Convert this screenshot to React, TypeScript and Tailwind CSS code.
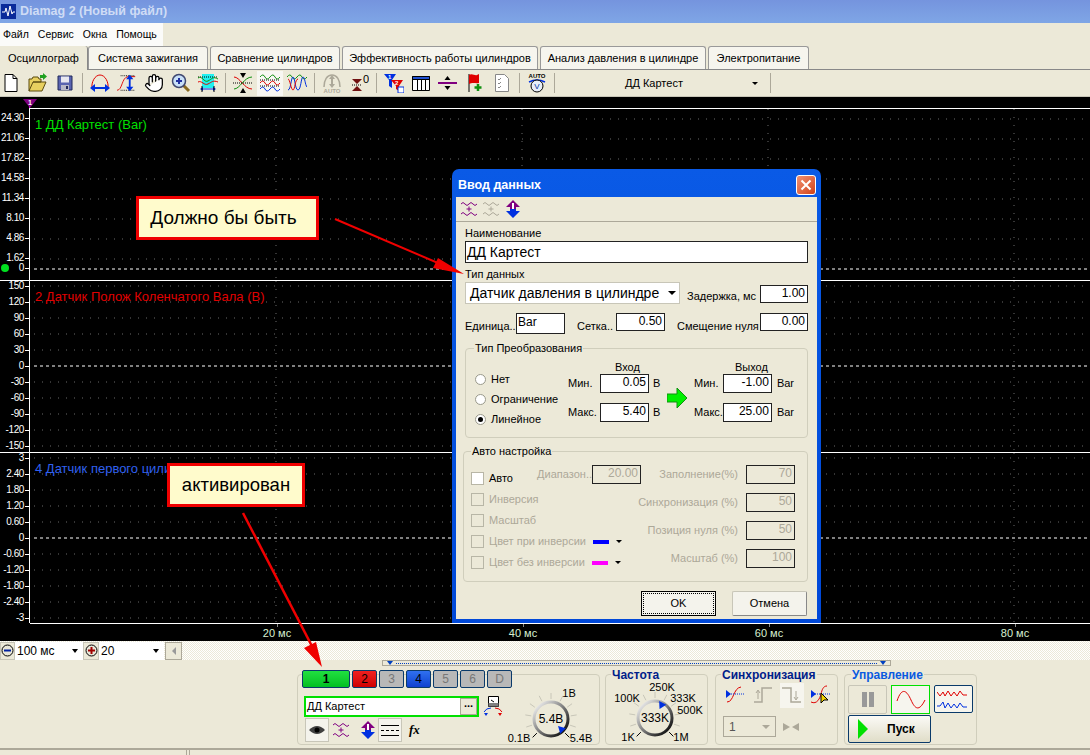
import React from 'react';
import { Hand } from 'lucide-react';

function IconNew() {
  return (
    <svg width="20" height="20" viewBox="0 0 20 20">
      <path d="M4 1.5h8l4 4v13H4z" fill="#fff" stroke="#000" />
      <path d="M12 1.5v4h4" fill="none" stroke="#000" />
    </svg>
  );
}

function IconOpen() {
  return (
    <svg width="20" height="20" viewBox="0 0 20 20">
      <path d="M1 18V6h3l1-2h5l1 2h2v3H5L1 18h13l4-9H5" fill="#e8d060" stroke="#5a4a10" />
      <path d="M12 2h3V0l4 3.5-4 3.5V5h-3z" fill="#20a020" />
    </svg>
  );
}

function IconSave() {
  return (
    <svg width="20" height="20" viewBox="0 0 20 20">
      <path d="M3 3h14v14H3z" fill="#5a64b0" stroke="#20285a" />
      <path d="M6 3.5h8v6H6z" fill="#e8e8f0" />
      <path d="M6 12h8v5H6z" fill="#b8b8c8" />
      <path d="M11 13h2v3h-2z" fill="#20285a" />
    </svg>
  );
}

function IconArc() {
  return (
    <svg width="20" height="20" viewBox="0 0 20 20" fill="none">
      <path d="M2 16C1 9 5 2 10 2s9 7 8 14" stroke="#e00000" />
      <path d="M3 15h14" stroke="#0030e0" strokeWidth="2" />
      <path d="M0 15l5-4v8zM20 15l-5-4v8z" fill="#0030e0" />
    </svg>
  );
}

function IconCurve() {
  return (
    <svg width="20" height="20" viewBox="0 0 22 20" fill="none">
      <path d="M0 18c6 0 5-14 12-15h8" stroke="#e00000" />
      <path d="M4 2h16M4 18h16" stroke="#000" strokeDasharray="1 1" />
      <path d="M14 5v10" stroke="#0030e0" strokeWidth="2" />
      <path d="M14 1l4 5h-8zM14 19l4-5h-8z" fill="#0030e0" />
    </svg>
  );
}

function IconZoom() {
  return (
    <svg width="20" height="20" viewBox="0 0 20 20" fill="none">
      <path d="M12 12l6 6" stroke="#8a6a20" strokeWidth="3" />
      <circle cx="8" cy="8" r="6.5" fill="#c8e0f8" stroke="#404870" strokeWidth="1.5" />
      <path d="M5 8h6M8 5v6" stroke="#2030a0" strokeWidth="2" />
    </svg>
  );
}

function IconCyan() {
  return (
    <svg width="20" height="20" viewBox="0 0 20 20" fill="none">
      <path d="M4 1h12v14H4z" fill="#20f0f0" />
      <path d="M0 4h20" stroke="#000" strokeDasharray="1 1" />
      <path d="M0 5c4-3 6 5 10 3s5-5 10-2" stroke="#109010" />
      <path d="M0 9c4-2 6 4 10 2s5-4 10-2" stroke="#e00000" />
      <path d="M4 16h12" stroke="#0030e0" />
      <path d="M2 16l3-2v4zM18 16l-3-2v4z" fill="#0030e0" />
      <path d="M4 13v6M16 13v6" stroke="#000" />
    </svg>
  );
}

function IconCross() {
  return (
    <svg width="20" height="20" viewBox="0 0 20 20" fill="none">
      <path d="M1 4c6 0 10 12 18 12" stroke="#e00000" />
      <path d="M1 16c6 0 10-12 18-12" stroke="#109010" />
      <path d="M0 10h20" stroke="#000" strokeDasharray="1 1" />
      <path d="M10 5L7 0h6zM10 15l-3 5h6z" fill="#000" />
    </svg>
  );
}

function IconWaves() {
  return (
    <svg width="20" height="20" viewBox="0 0 20 20" fill="none">
      <path d="M0 4q3-4 5 0t5 0 5 0 5 0" stroke="#109010" />
      <path d="M0 10q3-4 5 0t5 0 5 0 5 0" stroke="#e00000" />
      <path d="M0 16q3-4 5 0t5 0 5 0 5 0" stroke="#0030e0" />
      <path d="M0 7h20M0 13h20" stroke="#000" strokeDasharray="1 1" />
    </svg>
  );
}

function IconTwoWaves() {
  return (
    <svg width="20" height="20" viewBox="0 0 20 20" fill="none">
      <path d="M0 4q3-4 5 0t5 0 5 0 5 0" stroke="#109010" />
      <path d="M1 17c3 0 3-13 5-13s2 13 5 13 3-13 5-13 2 8 4 10" stroke="#0030e0" />
      <path d="M1 6c2 0 3 11 5 11s2-11 5-11" stroke="#e00000" />
    </svg>
  );
}

function IconAuto() {
  return (
    <svg width="20" height="20" viewBox="0 0 20 20" fill="none">
      <path d="M2 14C2 7 5 2 10 2s8 5 8 12" stroke="#aca899" strokeWidth="1.5" />
      <path d="M10 4v9" stroke="#aca899" strokeWidth="2" />
      <path d="M10 2l3 4H7zM10 15l3-4H7z" fill="#aca899" />
      <text x="10" y="20" textAnchor="middle" fontSize="6" fontWeight="700" fill="#aca899">AUTO</text>
    </svg>
  );
}

function IconZero() {
  return (
    <svg width="20" height="20" viewBox="0 0 20 20" fill="none">
      <path d="M3 6h10l-5 5z" fill="#701010" />
      <path d="M3 12h10" stroke="#000" strokeDasharray="1 1" />
      <path d="M8 13l5 5H3z" fill="#701010" />
      <text x="14" y="10" fontSize="11" fill="#000">0</text>
    </svg>
  );
}

function IconFilter() {
  return (
    <svg width="20" height="20" viewBox="0 0 20 20" fill="none">
      <path d="M0 1h12L8 7v8L5 13V7z" fill="#0030e0" />
      <text x="4" y="6" fontSize="6" fontWeight="700" fill="#fff">1</text>
      <path d="M7 7h12l-4 6v5l-3-2v-3z" fill="#e00000" />
      <text x="11" y="12" fontSize="6" fontWeight="700" fill="#fff">2</text>
      <path d="M14 14h6v6h-6z" fill="#fff" stroke="#0030e0" />
    </svg>
  );
}

function IconTable() {
  return (
    <svg width="20" height="20" viewBox="0 0 20 20" fill="none">
      <path d="M1.5 3.5h17v14h-17z" fill="#fff" stroke="#000" />
      <path d="M1.5 3.5h17v3h-17z" fill="#2050d0" stroke="#000" />
      <path d="M6.5 6v11M10.5 6v11M14.5 6v11" stroke="#000" />
    </svg>
  );
}

function IconSplit() {
  return (
    <svg width="20" height="20" viewBox="0 0 20 20" fill="none">
      <path d="M0 10h19" stroke="#800080" strokeWidth="2" />
      <path d="M9.5 3l3 4h-6zM9.5 17l3-4h-6z" fill="#000" />
    </svg>
  );
}

function IconFlag() {
  return (
    <svg width="20" height="20" viewBox="0 0 20 20" fill="none">
      <path d="M4 1v18" stroke="#000" />
      <path d="M4 2c3-2 6 1 8 0l2-1v9c-3 1-6-1-10 1z" fill="#e00000" />
      <path d="M13 11v7M9.5 14.5h7" stroke="#109010" strokeWidth="2.5" />
    </svg>
  );
}

function IconChecklist() {
  return (
    <svg width="20" height="20" viewBox="0 0 20 20" fill="none">
      <path d="M3.5 1.5h9l4 4v13h-13z" fill="#fff" stroke="#888" />
      <path d="M6 6l1 1 2-2M6 10l1 1 2-2M6 14l1 1 2-2" stroke="#888" />
    </svg>
  );
}

function IconAutoV() {
  return (
    <svg width="20" height="20" viewBox="0 0 20 20" fill="none">
      <text x="10" y="5" textAnchor="middle" fontSize="6" fontWeight="700" fill="#000">AUTO</text>
      <path d="M2 9q8-4 16 0" stroke="#0030e0" strokeWidth="1.5" />
      <circle cx="10" cy="13" r="6" fill="#e8eef8" stroke="#000" />
      <text x="10" y="16" textAnchor="middle" fontSize="8" fill="#0030a0">V</text>
    </svg>
  );
}

function WaveAdd({ color }: { color: string }) {
  return (
    <svg width="16" height="16" viewBox="0 0 16 16" fill="none">
      <path d="M0 3q2-3 4 0t4 0 4 0 4 0M0 13q2-3 4 0t4 0 4 0 4 0" stroke={color} />
      <path d="M8 5.5v5M5.5 8h5" stroke={color} />
    </svg>
  );
}

function UpDown() {
  return (
    <svg width="16" height="18" viewBox="0 0 16 18">
      <path d="M8 0l7 7h-4v2H5V7H1z" fill="#800080" />
      <path d="M5 9h6v2h4l-7 7-7-7h4z" fill="#0030e0" />
      <path d="M7 3h2v6H7z" fill="#fff" />
    </svg>
  );
}

function Dial({
  w,
  cx,
  cy,
  value,
  angle,
  labels,
  className,
}: {
  w: number;
  cx: number;
  cy: number;
  value: string;
  angle: number;
  labels: [string, number, number][];
  className?: string;
}) {
  const ticks = [-135, -108, -81, -54, -27, 0, 27, 54, 81, 108, 135];
  const id = `ring${cx}${w}`;
  const rad = (angle * Math.PI) / 180;
  return (
    <svg className={className} width={w} height="71" viewBox={`0 0 ${w} 71`} fontSize="11" fill="#000">
      <defs>
        <linearGradient id={id} x1="0" y1="0" x2="1" y2="1">
          <stop offset="0.1" stopColor="#e8e8e8" />
          <stop offset="0.9" stopColor="#111" />
        </linearGradient>
      </defs>
      {ticks.map((a) => {
        const r = (a * Math.PI) / 180;
        return (
          <line
            key={a}
            x1={cx + 20 * Math.sin(r)}
            y1={cy - 20 * Math.cos(r)}
            x2={cx + 26 * Math.sin(r)}
            y2={cy - 26 * Math.cos(r)}
            stroke={Math.abs(a) === 135 ? '#000' : '#c8c6b8'}
          />
        );
      })}
      <circle cx={cx} cy={cy} r="17" fill="#ece9d8" stroke={`url(#${id})`} strokeWidth="3" />
      <text x={cx} y={cy + 4} textAnchor="middle" fontSize="12">{value}</text>
      <path
        d="M-4 0h8L0-7z"
        fill="#0030e0"
        transform={`translate(${cx + 17 * Math.sin(rad)} ${cy - 17 * Math.cos(rad)}) rotate(${angle + 180})`}
      />
      {labels.map(([t, x, y]) => (
        <text key={t + x} x={x} y={y + 4} textAnchor="middle">{t}</text>
      ))}
    </svg>
  );
}

type PaneProps = {
  heightClass: string;
  full: boolean;
  title: string;
  titleClass: string;
  ticks: [string, number][];
  zero: number;
};

function Pane({ heightClass, full, title, titleClass, ticks, zero }: PaneProps) {
  return (
    <div className={`relative flex ${heightClass} ${full ? 'border-t border-white' : ''}`}>
      <div className="relative w-[30px] border-r border-white">
        {ticks.map(([label, y]) => (
          <div
            key={label}
            className="absolute right-[5px] text-[10px] leading-[12px] tracking-[-0.4px] text-white"
            style={{ top: y - 6 }}
          >
            {label}
          </div>
        ))}
        {ticks.map(([label, y]) => (
          <div key={label} className="absolute right-0 h-px w-[4px] bg-white" style={{ top: y }} />
        ))}
      </div>
      <div className={`relative flex-1 ${full ? '' : 'border-t border-white'}`}>
        <svg className="absolute inset-0 h-full w-full">
          {ticks.map(([label, y]) => (
            <line
              key={label}
              x1="4"
              x2="1060"
              y1={y}
              y2={y}
              stroke={y === zero ? '#fff' : '#6a6a6a'}
              strokeDasharray={y === zero ? '3 3' : '1 7'}
            />
          ))}
          {[246, 492, 738, 984].map((x) => (
            <line key={x} x1={x} x2={x} y1="0" y2="172" stroke="#6a6a6a" strokeDasharray="1 7" />
          ))}
        </svg>
        <div className={`relative pl-[5px] pt-[9px] text-[13px] leading-[14px] ${titleClass}`}>{title}</div>
      </div>
    </div>
  );
}

function Field({ value, className, muted }: { value: string; className: string; muted?: boolean }) {
  return (
    <div
      className={`flex-none border border-[#222] pr-[2px] text-right text-[12px] leading-[15px] ${
        muted ? 'bg-[#ece9d8] text-[#aca899]' : 'bg-white text-black'
      } ${className}`}
    >
      {value}
    </div>
  );
}

function Radio({ label, checked }: { label: string; checked?: boolean }) {
  return (
    <div className="flex h-[20px] items-center gap-[5px] text-[11px]">
      <span className="flex h-[11px] w-[11px] items-center justify-center rounded-full border border-[#9a9a8c] bg-white">
        {checked && <span className="h-[5px] w-[5px] rounded-full bg-black" />}
      </span>
      {label}
    </div>
  );
}

function CheckRow({ label, active, swatch }: { label: string; active?: boolean; swatch?: string }) {
  return (
    <div className={`flex h-[21px] items-center gap-[5px] text-[11px] ${active ? 'text-black' : 'text-[#aca899]'}`}>
      <span className={`h-[13px] w-[13px] border border-[#b8b6a6] ${active ? 'bg-white' : ''}`} />
      <span className="whitespace-nowrap">{label}</span>
      {swatch && (
        <>
          <span className={`ml-[2px] h-[4px] w-[16px] ${swatch}`} />
          <span className="ml-[2px] h-0 w-0 border-x-[3px] border-t-[3px] border-x-transparent border-t-black" />
        </>
      )}
    </div>
  );
}

function Dialog() {
  return (
    <div className="absolute left-[452px] top-[169px] flex h-[454px] w-[369px] flex-col rounded-t-[7px] bg-gradient-to-b from-[#0a5ae6] to-[#0048d8] p-[4px] pt-0 text-[11px] text-black">
      <div className="flex h-[28px] flex-none items-center justify-between pl-[2px] pr-[1px]">
        <span className="pt-[5px] text-[12.5px] font-bold text-white">Ввод данных</span>
        <span className="mt-[3px] flex h-[20px] w-[20px] items-center justify-center rounded-[3px] border border-white bg-gradient-to-br from-[#f09070] to-[#d04010]">
          <svg width="12" height="12" viewBox="0 0 12 12">
            <path d="M1.5 1.5l9 9M10.5 1.5l-9 9" stroke="#fff" strokeWidth="2" />
          </svg>
        </span>
      </div>
      <div className="flex flex-1 flex-col bg-[#ece9d8]">
        <div className="flex h-[25px] flex-none items-center gap-[6px] border-b border-[#aca899] pl-[5px]">
          <WaveAdd color="#800080" />
          <WaveAdd color="#aca899" />
          <UpDown />
        </div>
        <div className="flex flex-col px-[9px] pt-[4px]">
          <div className="h-[14px] leading-[14px]">Наименование</div>
          <div className="mt-[1px] h-[22px] border border-[#222] bg-white pl-[1px] text-[14px] leading-[20px]">ДД Картест</div>
          <div className="mt-[5px] h-[13px] leading-[13px]">Тип данных</div>
          <div className="mt-[1px] flex h-[22px] items-end">
            <div className="flex h-[22px] w-[215px] flex-none items-center justify-between border border-[#c8c6b8] bg-white pl-[4px] pr-[3px] text-[14px]">
              Датчик давления в цилиндре
              <span className="h-0 w-0 border-x-[4px] border-t-[4px] border-x-transparent border-t-black" />
            </div>
            <span className="ml-[7px] w-[73px] whitespace-nowrap">Задержка, мс</span>
            <Field value="1.00" className="mb-[1px] h-[18px] w-[48px]" />
          </div>
          <div className="mt-[9px] flex h-[21px] items-start">
            <span className="mt-[5px] w-[51px]">Единица..</span>
            <div className="h-[21px] w-[49px] border border-[#222] bg-white pl-[1px] text-[12px] leading-[17px]">Bar</div>
            <span className="ml-[12px] mt-[5px] w-[39px]">Сетка..</span>
            <Field value="0.50" className="h-[18px] w-[49px]" />
            <span className="ml-[12px] mt-[5px] w-[83px] whitespace-nowrap">Смещение нуля</span>
            <Field value="0.00" className="h-[18px] w-[48px]" />
          </div>

          <div className="relative mt-[14px] flex h-[90px] rounded-[4px] border border-[#d0cebc]">
            <span className="absolute -top-[7px] left-[8px] bg-[#ece9d8] px-px leading-[12px]">Тип Преобразования</span>
            <div className="w-[102px] pl-[9px] pt-[20px]">
              <Radio label="Нет" />
              <Radio label="Ограничение" />
              <Radio label="Линейное" checked />
            </div>
            <div className="w-[99px]">
              <div className="h-[25px] pl-[47px] pt-[12px] leading-[13px]">Вход</div>
              <div className="flex items-center">
                <span className="w-[32px]">Мин.</span>
                <Field value="0.05" className="h-[19px] w-[49px]" />
                <span className="ml-[4px]">В</span>
              </div>
              <div className="mt-[10px] flex items-center">
                <span className="w-[32px]">Макс.</span>
                <Field value="5.40" className="h-[19px] w-[49px]" />
                <span className="ml-[4px]">В</span>
              </div>
            </div>
            <div className="w-[27px] pt-[39px]">
              <svg width="20" height="20" viewBox="0 0 20 20">
                <path d="M0 6h10V0l10 10-10 10v-6H0z" fill="#00f000" stroke="#109010" />
              </svg>
            </div>
            <div className="w-[100px]">
              <div className="h-[25px] pl-[41px] pt-[12px] leading-[13px]">Выход</div>
              <div className="flex items-center">
                <span className="w-[30px]">Мин.</span>
                <Field value="-1.00" className="h-[19px] w-[49px]" />
                <span className="ml-[5px]">Bar</span>
              </div>
              <div className="mt-[10px] flex items-center">
                <span className="w-[30px]">Макс.</span>
                <Field value="25.00" className="h-[19px] w-[49px]" />
                <span className="ml-[5px]">Bar</span>
              </div>
            </div>
          </div>

          <div className="relative -ml-[2px] mt-[13px] flex h-[131px] rounded-[4px] border border-[#d0cebc]">
            <span className="absolute -top-[7px] left-[7px] bg-[#ece9d8] px-px leading-[12px]">Авто настройка</span>
            <div className="relative w-[163px] flex-none pl-[7px] pt-[16px]">
              <CheckRow label="Авто" active />
              <CheckRow label="Инверсия" />
              <CheckRow label="Масштаб" />
              <CheckRow label="Цвет при инверсии" swatch="bg-[#0000ff]" />
              <CheckRow label="Цвет без инверсии" swatch="bg-[#ff00ff]" />
            </div>
            <div className="relative flex-1">
              <div className="absolute left-[-90px] top-[13px] flex items-center">
                <span className="w-[55px] whitespace-nowrap text-right text-[#aca899]">Диапазон..</span>
                <Field value="20.00" muted className="h-[19px] w-[49px]" />
              </div>
              <div className="flex flex-col items-end gap-[9px] pr-[12px] pt-[13px] text-[#aca899]">
                <div className="flex items-center gap-[8px] whitespace-nowrap">Заполнение(%)<Field value="70" muted className="h-[19px] w-[49px]" /></div>
                <div className="flex items-center gap-[8px] whitespace-nowrap">Синхронизация (%)<Field value="50" muted className="h-[19px] w-[49px]" /></div>
                <div className="flex items-center gap-[8px] whitespace-nowrap">Позиция нуля (%)<Field value="50" muted className="h-[19px] w-[49px]" /></div>
                <div className="flex items-center gap-[8px] whitespace-nowrap">Масштаб (%)<Field value="100" muted className="h-[19px] w-[49px]" /></div>
              </div>
            </div>
          </div>

          <div className="mt-[9px] flex justify-end gap-[16px] pr-px">
            <div className="flex h-[25px] w-[75px] items-center justify-center border border-black bg-[#f4f3ec] outline-1 -outline-offset-3 outline-dotted outline-black">OK</div>
            <div className="flex h-[25px] w-[75px] items-center justify-center rounded-[2px] border border-[#c8c6b8] border-b-[#888] border-r-[#888] bg-[#f4f3ec]">Отмена</div>
          </div>
        </div>
      </div>
    </div>
  );
}

function ChannelBtn({ label, className }: { label: string; className: string }) {
  return (
    <div className={`flex h-[18px] flex-none items-center justify-center rounded-[2px] border border-[#0a3a6a] text-[12px] ${className}`}>
      {label}
    </div>
  );
}

function BottomPanel() {
  return (
    <div className="flex h-[88px] flex-col bg-[#ece9d8]">
      <div className="ml-[382px] flex h-[6px] w-[509px] items-center justify-between border border-[#aca899] px-[4px]">
        <span className="h-0 w-0 border-x-[3px] border-t-[4px] border-x-transparent border-t-[#0040c0]" />
        <span className="mx-[3px] h-px flex-1 border-t border-dotted border-[#0040c0]" />
        <span className="h-0 w-0 border-x-[3px] border-t-[4px] border-x-transparent border-t-[#0040c0]" />
      </div>
      <div className="mt-[8px] flex pl-[297px]">
        <div className="flex h-[71px] w-[303px] rounded-[4px] border border-[#d0cebc]">
          <div className="w-[214px] flex-none pl-[4px]">
            <div className="-mt-[5px] flex gap-[2px]">
              <ChannelBtn label="1" className="w-[48px] bg-gradient-to-b from-[#20e040] to-[#00c020] font-bold" />
              <ChannelBtn label="2" className="w-[25px] bg-gradient-to-b from-[#f02020] to-[#d00000]" />
              <ChannelBtn label="3" className="w-[25px] bg-[#b8b8b8] text-[#777]" />
              <ChannelBtn label="4" className="w-[25px] bg-gradient-to-b from-[#3070f0] to-[#1040d0]" />
              <ChannelBtn label="5" className="w-[25px] bg-[#b8b8b8] text-[#777]" />
              <ChannelBtn label="6" className="w-[25px] bg-[#b8b8b8] text-[#777]" />
              <ChannelBtn label="D" className="w-[25px] bg-[#b8b8b8] text-[#777]" />
            </div>
            <div className="ml-[2px] mt-[7px] flex items-center gap-[4px]">
              <div className="flex h-[21px] w-[175px] items-center justify-between border-2 border-[#00e000] bg-white pl-[1px] text-[11px]">
                ДД Картест
                <span className="flex h-[17px] w-[17px] items-center justify-center border border-[#aca899] bg-[#ece9d8] pb-[5px] font-bold">...</span>
              </div>
              <svg width="20" height="22" viewBox="0 0 20 22" fill="none">
                <path d="M5.5 1.5h10v10h-10z" fill="#fff" stroke="#000" />
                <path d="M5.5 8h10v3.5h-10z" fill="#808080" />
                <path d="M8 5l3 2" stroke="#000" />
                <path d="M1 17q2-4 7-4" stroke="#0030e0" />
                <path d="M19 17q-2-4-7-4" stroke="#e00000" />
                <path d="M1 18l4 0-2 3z" fill="#0030e0" />
                <path d="M15 18l4 0-2 3z" fill="#e00000" />
              </svg>
            </div>
            <div className="mt-px flex h-[24px] items-center pl-[3px]">
              <span className="flex h-[24px] w-[24px] items-center justify-center border border-[#c8c6b8] bg-[#f4f3ec]">
                <svg width="16" height="10" viewBox="0 0 16 10">
                  <path d="M0 5q8-8 16 0-8 8-16 0z" fill="#404040" />
                  <circle cx="8" cy="5" r="2.5" fill="#000" />
                </svg>
              </span>
              <span className="ml-[4px]"><WaveAdd color="#800080" /></span>
              <span className="ml-[11px]"><UpDown /></span>
              <span className="ml-[2px] flex h-[24px] w-[24px] flex-col items-center justify-center gap-[4px] border border-[#c8c6b8] bg-[#f4f3ec]">
                <span className="h-px w-[18px] bg-black" />
                <span className="h-px w-[18px] border-t border-dashed border-black" />
                <span className="h-px w-[18px] bg-black" />
              </span>
              <span className="ml-[7px] font-['Liberation_Serif',serif] text-[13px] font-bold italic">fx</span>
            </div>
          </div>
          <Dial
            className="-ml-[8px] flex-none"
            w={95}
            cx={47}
            cy={44}
            value="5.4В"
            angle={135}
            labels={[['1В', 65, 18], ['0.1В', 15, 63], ['5.4В', 77, 63]]}
          />
        </div>

        <div className="relative ml-[5px] h-[71px] w-[103px] rounded-[4px] border border-[#d0cebc]">
          <span className="absolute -top-[7px] left-[5px] bg-[#ece9d8] px-px text-[12px] font-bold leading-[14px] text-[#00208a]">Частота</span>
          <Dial
            w={101}
            cx={49}
            cy={43}
            value="333K"
            angle={27}
            labels={[['250K', 56, 12], ['100K', 21, 23], ['333K', 77, 23], ['500K', 84, 35], ['1K', 22, 62], ['1M', 75, 62]]}
          />
        </div>

        <div className="relative ml-[7px] h-[71px] w-[123px] rounded-[4px] border border-[#d0cebc]">
          <span className="absolute -top-[7px] left-[5px] bg-[#ece9d8] px-px text-[12px] font-bold leading-[14px] text-[#00208a]">Синхронизация</span>
          <div className="flex h-[28px] items-center pl-[9px] pt-[12px]">
            <svg width="20" height="20" viewBox="0 0 20 20" fill="none">
              <path d="M2 17c7 0 6-14 14-15" stroke="#e00000" />
              <path d="M4 9h15" stroke="#0030e0" strokeDasharray="1 1" />
              <path d="M1 5l5 4-5 4z" fill="#0030e0" />
            </svg>
            <svg className="ml-[9px]" width="20" height="20" viewBox="0 0 20 20" fill="none">
              <path d="M0 17h8V3h10" stroke="#aca899" strokeWidth="1.5" />
              <path d="M4 14V6M2 8l2-3 2 3" stroke="#aca899" />
            </svg>
            <span className="ml-[6px] flex h-[25px] w-[24px] items-center justify-center bg-[#f6f5ee]">
              <svg width="20" height="20" viewBox="0 0 20 20" fill="none">
                <path d="M0 3h9v14h10" stroke="#aca899" strokeWidth="1.5" />
                <path d="M14 6v8M12 12l2 3 2-3" stroke="#aca899" />
              </svg>
            </span>
            <svg className="ml-[7px]" width="20" height="20" viewBox="0 0 20 20" fill="none">
              <path d="M0 17c6 3 9-4 10-8s2-8 6-8" stroke="#e00000" />
              <path d="M4 9h16" stroke="#0030e0" strokeDasharray="1 1" />
              <path d="M0 5l5 4-5 4z" fill="#0030e0" />
              <path d="M10 8v10l3-3h4z" fill="#f0d000" stroke="#000" />
            </svg>
          </div>
          <div className="mt-[13px] flex items-center pl-[7px]">
            <div className="flex h-[21px] w-[53px] items-center justify-between border border-[#aca899] px-[5px] text-[12px] text-[#555]">
              1
              <span className="h-0 w-0 border-x-[4px] border-t-[4px] border-x-transparent border-t-[#aca899]" />
            </div>
            <svg className="ml-[6px]" width="18" height="12" viewBox="0 0 18 12">
              <path d="M8 6L1 2v8zM10 6l7-4v8z" fill="#aca899" />
            </svg>
          </div>
        </div>

        <div className="relative ml-[6px] h-[71px] w-[133px] rounded-[4px] border border-[#d0cebc]">
          <span className="absolute -top-[7px] left-[6px] bg-[#ece9d8] px-px text-[12px] font-bold leading-[14px] text-[#0a5ae0]">Управление</span>
          <div className="flex gap-[4px] pl-[3px] pt-[10px]">
            <div className="flex h-[29px] w-[39px] items-center justify-center gap-[2px] rounded-[2px] border border-[#c8c6b8]">
              <span className="h-[15px] w-[5px] bg-[#999]" />
              <span className="h-[15px] w-[5px] bg-[#999]" />
            </div>
            <div className="flex h-[29px] w-[39px] items-center justify-center border border-[#00e000] bg-[#f6f5ee]">
              <svg width="30" height="20" viewBox="0 0 30 20" fill="none">
                <path d="M1 11C6-4 11 1 15 10s8 12 14 0" stroke="#e00000" />
              </svg>
            </div>
            <div className="flex h-[28px] w-[39px] flex-col items-center justify-center gap-[3px] rounded-[2px] border border-[#0a3a6a] bg-[#f6f5ee]">
              <svg width="33" height="8" viewBox="0 0 33 8" fill="none">
                <path d="M0 2l3 4 3-4 2 4 3-5 3 5 3-4 3 4 3-5 3 4h4" stroke="#e00000" />
              </svg>
              <svg width="33" height="8" viewBox="0 0 33 8" fill="none">
                <path d="M0 5h3l3-4 2 6 3-5 3 5 3-4 3 4 3-5 3 4h4" stroke="#0030e0" />
              </svg>
            </div>
          </div>
          <div className="ml-[3px] mt-px flex h-[28px] w-[83px] items-center rounded-[2px] border border-[#0a3a6a] bg-gradient-to-b from-[#fbfaf6] to-[#e0ddc8] pl-[9px]">
            <svg width="10" height="20" viewBox="0 0 10 20">
              <path d="M0 0l10 10L0 20z" fill="#00e000" />
            </svg>
            <span className="ml-[19px] text-[12px] font-bold">Пуск</span>
          </div>
        </div>
      </div>
    </div>
  );
}

export default function App() {
  const toolIcons = (
    <div className="flex h-[27px] items-center gap-[7px] border-b border-[#c8c6b8] pl-px">
      <IconNew />
      <IconOpen />
      <IconSave />
      <span className="h-[20px] w-px bg-[#aca899]" />
      <IconArc />
      <IconCurve />
      <Hand size={20} className="fill-white" strokeWidth={1.5} />
      <IconZoom />
      <IconCyan />
      <span className="h-[20px] w-px bg-[#aca899]" />
      <IconCross />
      <span className="-mx-[3px] flex h-[25px] items-center bg-[#f8f7f2] px-[3px]"><IconWaves /></span>
      <IconTwoWaves />
      <span className="h-[20px] w-px bg-[#aca899]" />
      <IconAuto />
      <IconZero />
      <span className="h-[20px] w-px bg-[#aca899]" />
      <IconFilter />
      <IconTable />
      <IconSplit />
      <IconFlag />
      <IconChecklist />
      <span className="h-[20px] w-px bg-[#aca899]" />
      <IconAutoV />
      <span className="h-[20px] w-px bg-[#aca899]" />
      <div className="flex w-[201px] items-center justify-between pl-[63px] pr-[5px] text-[11px]">
        ДД Картест
        <span className="h-0 w-0 border-x-[3px] border-t-[3px] border-x-transparent border-t-black" />
      </div>
      <span className="h-[20px] w-px bg-[#aca899]" />
    </div>
  );

  return (
    <div className="relative h-[755px] w-[1090px] overflow-hidden bg-[#ece9d8] font-['Liberation_Sans',sans-serif] text-black">
      <div className="flex h-[23px] items-center gap-[4px] bg-gradient-to-b from-[#7594de] to-[#7fa6e6] pl-px">
        <svg width="15" height="15" viewBox="0 0 15 15">
          <path d="M0 0h15v15H0z" fill="#0a2a9a" />
          <path d="M1 8h3l1-4 2 8 2-10 2 8 1-2h2" stroke="#fff" fill="none" />
        </svg>
        <span className="text-[12.5px] font-bold text-[#cfdcf5]">Diamag 2 (Новый файл)</span>
      </div>
      <div className="flex h-[23px] w-[163px] items-center gap-[9px] bg-[#fbfbf9] pl-[3px] text-[10.5px]">
        <span>Файл</span><span>Сервис</span><span>Окна</span><span>Помощь</span>
      </div>
      <div className="flex h-[24px] items-end border-b border-[#888] text-[11px]">
        <div className="relative top-px z-10 flex h-[24px] w-[88px] items-center justify-center rounded-t-[3px] border-r border-[#888] bg-[#ece9d8]">Осциллограф</div>
        <div className="flex h-[23px] w-[120px] items-center justify-center rounded-t-[3px] border border-b-0 border-[#999] bg-[#f6f5ee]">Система зажигания</div>
        <div className="ml-[2px] flex h-[23px] w-[130px] items-center justify-center rounded-t-[3px] border border-b-0 border-[#999] bg-[#f6f5ee]">Сравнение цилиндров</div>
        <div className="ml-[2px] flex h-[23px] w-[196px] items-center justify-center rounded-t-[3px] border border-b-0 border-[#999] bg-[#f6f5ee]">Эффективность работы цилиндров</div>
        <div className="ml-[2px] flex h-[23px] w-[166px] items-center justify-center rounded-t-[3px] border border-b-0 border-[#999] bg-[#f6f5ee]">Анализ давления в цилиндре</div>
        <div className="ml-[2px] flex h-[23px] w-[101px] items-center justify-center rounded-t-[3px] border border-b-0 border-[#999] bg-[#f6f5ee]">Электропитание</div>
      </div>
      {toolIcons}

      <div className="relative h-[544px] bg-black">
        <div className="relative h-[11px]">
          <div className="absolute left-[23px] top-[2px] h-0 w-0 border-x-[7px] border-t-[9px] border-x-transparent border-t-[#800080]" />
          <div className="absolute left-[23px] top-[2px] w-[14px] text-center text-[7px] font-bold leading-[7px] text-white">1</div>
          <div className="absolute left-[29px] top-[9px] h-[3px] w-px bg-[#c000c0]" />
        </div>
        <Pane
          heightClass="h-[172px]"
          full={false}
          title="1 ДД Картест (Bar)"
          titleClass="text-[#00e000]"
          zero={160}
          ticks={[['24.30', 10], ['21.06', 30], ['17.82', 50], ['14.58', 70], ['11.34', 90], ['8.10', 110], ['4.86', 130], ['1.62', 150], ['0', 160]]}
        />
        <Pane
          heightClass="h-[172px]"
          full
          title="2 Датчик Полож Коленчатого Вала (В)"
          titleClass="text-[#e00000]"
          zero={85}
          ticks={[['150', 5], ['120', 21], ['90', 37], ['60', 53], ['30', 69], ['0', 85], ['-30', 101], ['-60', 117], ['-90', 133], ['-120', 149], ['-150', 165]]}
        />
        <Pane
          heightClass="h-[171px]"
          full
          title="4 Датчик первого цилиндра (В)"
          titleClass="text-[#3060f0]"
          zero={85}
          ticks={[['3', 5], ['2.40', 21], ['1.80', 37], ['1.20', 53], ['0.60', 69], ['0', 85], ['-0.60', 101], ['-1.20', 117], ['-1.80', 133], ['-2.40', 149], ['-3', 165]]}
        />
        <div className="relative ml-[30px] h-[18px] border-t border-white">
          {[['20 мс', 247], ['40 мс', 493], ['60 мс', 739], ['80 мс', 985]].map(([t, x]) => (
            <React.Fragment key={t}>
              <div className="absolute top-0 h-[3px] w-px bg-[#888]" style={{ left: x as number }} />
              <div
                className="absolute top-[3px] -translate-x-1/2 whitespace-nowrap text-[11px] leading-[12px] text-[#d8f0d0]"
                style={{ left: x as number }}
              >
                {t}
              </div>
            </React.Fragment>
          ))}
        </div>
        <div className="absolute left-[5px] top-[167px] h-[8px] w-[8px] -translate-x-1/2 rounded-full bg-[#00e020]" />
      </div>

      <div className="flex h-[19px] items-center bg-[repeating-conic-gradient(#ece9d8_0%_25%,#ffffff_0%_50%)] bg-[length:2px_2px]">
        <span className="flex h-[18px] w-[15px] items-center justify-center border border-[#c8c6b8] bg-[#ece9d8]">
          <svg width="13" height="13" viewBox="0 0 13 13">
            <circle cx="6.5" cy="6.5" r="5.5" fill="#e8e6d8" stroke="#000" />
            <path d="M3 6.5h7" stroke="#0020a0" strokeWidth="2" />
          </svg>
        </span>
        <div className="flex h-[18px] w-[68px] items-center justify-between bg-white pl-[2px] pr-[5px] text-[12px]">
          100 мс
          <span className="h-0 w-0 border-x-[3px] border-t-[4px] border-x-transparent border-t-black" />
        </div>
        <span className="flex h-[18px] w-[16px] items-center justify-center border border-[#c8c6b8] bg-[#ece9d8]">
          <svg width="13" height="13" viewBox="0 0 13 13">
            <circle cx="6.5" cy="6.5" r="5.5" fill="#e8e6d8" stroke="#000" />
            <path d="M3 6.5h7M6.5 3v7" stroke="#a00000" strokeWidth="2" />
          </svg>
        </span>
        <div className="flex h-[18px] w-[65px] items-center justify-between bg-white pl-[2px] pr-[5px] text-[12px]">
          20
          <span className="h-0 w-0 border-x-[3px] border-t-[4px] border-x-transparent border-t-black" />
        </div>
        <span className="ml-px flex h-[18px] w-[17px] items-center justify-center border border-[#aca899] bg-[#ece9d8]">
          <span className="h-0 w-0 border-y-[4px] border-r-[4px] border-y-transparent border-r-[#999]" />
        </span>
      </div>

      <BottomPanel />
      <div className="flex h-[7px] border-t-2 border-[#aca899]">
        <div className="w-[187px] border-r border-[#aca899]" />
        <div className="ml-[2px] border-l border-[#aca899]" />
      </div>

      <Dialog />

      <div className="absolute left-[136px] top-[196px] flex h-[44px] w-[183px] items-center justify-center border-[3px] border-[#f00000] bg-[#fffbcc] pr-[8px] text-[19px]">
        Должно бы быть
      </div>
      <div className="absolute left-[167px] top-[463px] flex h-[44px] w-[138px] items-center justify-center border-[3px] border-[#f00000] bg-[#fffbcc] text-[18.5px]">
        активирован
      </div>
      <svg className="pointer-events-none absolute left-0 top-0" width="1090" height="755" fill="none">
        <path d="M335 219L445 266" stroke="#f00000" strokeWidth="2" />
        <path d="M464 274L438 258L433 268z" fill="#f00000" />
        <path d="M243 513L315 652" stroke="#f00000" strokeWidth="2.5" />
        <path d="M322 667L304 648L316 642z" fill="#f00000" />
      </svg>
    </div>
  );
}
